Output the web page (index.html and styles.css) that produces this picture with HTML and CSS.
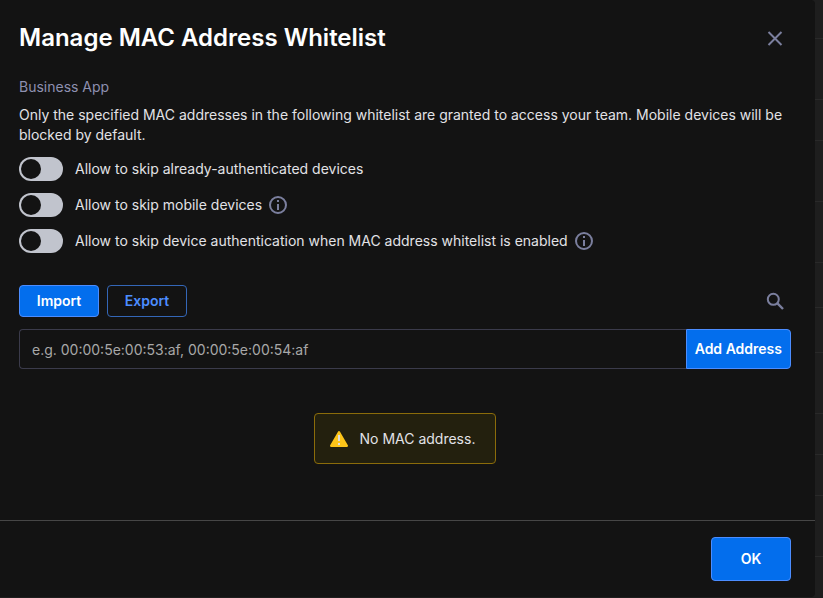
FILE: index.html
```html
<!DOCTYPE html>
<html lang="en">
<head>
<meta charset="utf-8">
<title>Manage MAC Address Whitelist</title>
<link rel="stylesheet" href="styles.css">
</head>
<body>
<div class="page">
  <main class="dialog" role="dialog" aria-labelledby="dialog-title">
    <header class="dialog-header">
      <h1 id="dialog-title">Manage MAC Address Whitelist</h1>
      <button class="icon-button" type="button" aria-label="Close">
        <svg width="18" height="18" viewBox="0 0 18 18"><path d="M2.5 3l13 13M15.5 3l-13 13" fill="none" stroke="currentColor" stroke-width="2"/></svg>
      </button>
    </header>
    <div class="dialog-body">
      <p class="app-name">Business App</p>
      <p class="intro">Only the specified MAC addresses in the following whitelist are granted to access your team. Mobile devices will be blocked by default.</p>
      <div class="options">
        <div class="option">
          <input class="toggle" type="checkbox" id="skip-auth">
          <label for="skip-auth">Allow to skip already-authenticated devices</label>
        </div>
        <div class="option">
          <input class="toggle" type="checkbox" id="skip-mobile">
          <label for="skip-mobile">Allow to skip mobile devices</label>
          <svg class="info" width="18" height="18" viewBox="0 0 18 18"><circle cx="9" cy="9" r="8" fill="none" stroke="currentColor" stroke-width="2"/><path d="M8 4h2v2H8zM8 8h2v6H8z" fill="currentColor"/></svg>
        </div>
        <div class="option">
          <input class="toggle" type="checkbox" id="skip-whitelist">
          <label for="skip-whitelist">Allow to skip device authentication when MAC address whitelist is enabled</label>
          <svg class="info" width="18" height="18" viewBox="0 0 18 18"><circle cx="9" cy="9" r="8" fill="none" stroke="currentColor" stroke-width="2"/><path d="M8 4h2v2H8zM8 8h2v6H8z" fill="currentColor"/></svg>
        </div>
      </div>
      <div class="toolbar">
        <button class="button primary" type="button">Import</button>
        <button class="button outline" type="button">Export</button>
        <button class="icon-button search" type="button" aria-label="Search">
          <svg width="18" height="18" viewBox="0 0 18 18"><circle cx="7.3" cy="7.3" r="5.5" fill="none" stroke="currentColor" stroke-width="2"/><path d="M11.2 11.2l5.8 5.8" fill="none" stroke="currentColor" stroke-width="2.4"/></svg>
        </button>
      </div>
      <form class="add-form">
        <input class="address" type="text" aria-label="MAC addresses" placeholder="e.g. 00:00:5e:00:53:af, 00:00:5e:00:54:af">
        <button class="button primary add" type="button">Add Address</button>
      </form>
      <div class="notice" role="status">
        <svg width="18" height="16" viewBox="0 0 18 16"><path d="M9 1.3L16.8 14.8H1.2z" fill="#fcc419" stroke="#fcc419" stroke-width="2.4" stroke-linejoin="round"/><path d="M8 4h2v6H8zM8 12h2v2H8z" fill="#ddd"/></svg>
        <span>No MAC address.</span>
      </div>
    </div>
    <footer class="dialog-footer">
      <button class="button primary ok" type="button">OK</button>
    </footer>
  </main>
  <div class="backdrop" aria-hidden="true">
    <div class="row head"></div>
    <div class="row tall"></div>
    <div class="row"></div>
    <div class="row tall"></div>
    <div class="row tall"></div>
    <div class="row medium"></div>
    <div class="row medium"></div>
    <div class="row tall"></div>
    <div class="row"></div>
    <div class="row"></div>
    <div class="row tall"></div>
  </div>
</div>
</body>
</html>
```
FILE: styles.css
```css
* { box-sizing: border-box; }

body {
  margin: 0;
  background: #1e1e1e;
  color: #e2e2e6;
  font: 14px/20px Inter, "Liberation Sans", sans-serif;
}

h1, p { margin: 0; }

button, input { font: inherit; margin: 0; }

svg { display: block; flex: none; }

.page { display: flex; min-height: 100vh; padding-bottom: 1px; }

.dialog {
  flex: 1;
  min-width: 0;
  display: flex;
  flex-direction: column;
  background: #131313;
  border-radius: 0 4px 4px 0;
}

.dialog-header {
  display: flex;
  align-items: center;
  justify-content: space-between;
  padding: 22px 24px 0 19px;
}

h1 {
  color: #fff;
  font-size: 24px;
  line-height: 32px;
  font-weight: 600;
}

.icon-button {
  display: grid;
  place-items: center;
  width: 32px;
  height: 32px;
  padding: 0;
  border: 0;
  background: none;
  color: #7b7f9e;
}

.dialog-body {
  flex: 1;
  display: flex;
  flex-direction: column;
  padding: 23px 24px 24px 19px;
}

.app-name { color: #8e90b0; margin-bottom: 8px; }

.options {
  display: flex;
  flex-direction: column;
  gap: 12px;
  margin-top: 12px;
}

.option { display: flex; align-items: center; height: 24px; }

.option label { margin-left: 12px; }

.toggle {
  appearance: none;
  width: 44px;
  height: 24px;
  padding: 2px;
  border-radius: 12px;
  background: #c1c4cd;
}

.toggle::before {
  content: "";
  display: block;
  width: 20px;
  height: 20px;
  border-radius: 50%;
  background: #131313;
}

.toggle:checked::before { margin-left: auto; }

.info { margin-left: 7px; color: #7b7f9e; }

.toolbar { display: flex; gap: 8px; margin-top: 32px; }

.button {
  min-width: 80px;
  height: 32px;
  padding: 0 8px;
  border: 1px solid #4c8dff;
  border-radius: 4px;
  font-weight: 600;
}

.primary { background: #036eed; color: #fff; }

.outline { background: none; border-color: #3467b8; color: #4c8dff; }

.search { margin-left: auto; }

.add-form { display: flex; margin-top: 12px; }

.address {
  flex: 1;
  min-width: 0;
  height: 40px;
  padding: 0 12px;
  border: 1px solid #3b3b4b;
  border-right: 0;
  border-radius: 4px 0 0 4px;
  background: none;
  color: inherit;
}

.address::placeholder { color: #a8a8a8; opacity: 1; }

.add { height: 40px; border-radius: 0 4px 4px 0; }

.notice {
  align-self: center;
  display: flex;
  align-items: center;
  gap: 12px;
  margin-top: 44px;
  padding: 15px 20px 14px 15px;
  border: 1px solid #8b6c0a;
  border-radius: 4px;
  background: #23200e;
}

.dialog-footer {
  display: flex;
  justify-content: flex-end;
  padding: 16px 24px;
  border-top: 1px solid #464646;
}

.ok { height: 44px; }

.backdrop { width: 8px; }

.row { height: 41px; border-bottom: 1px solid #292929; }

.row.head { height: 39px; }

.row.medium { height: 45px; }

.row.tall { height: 61px; }
```
